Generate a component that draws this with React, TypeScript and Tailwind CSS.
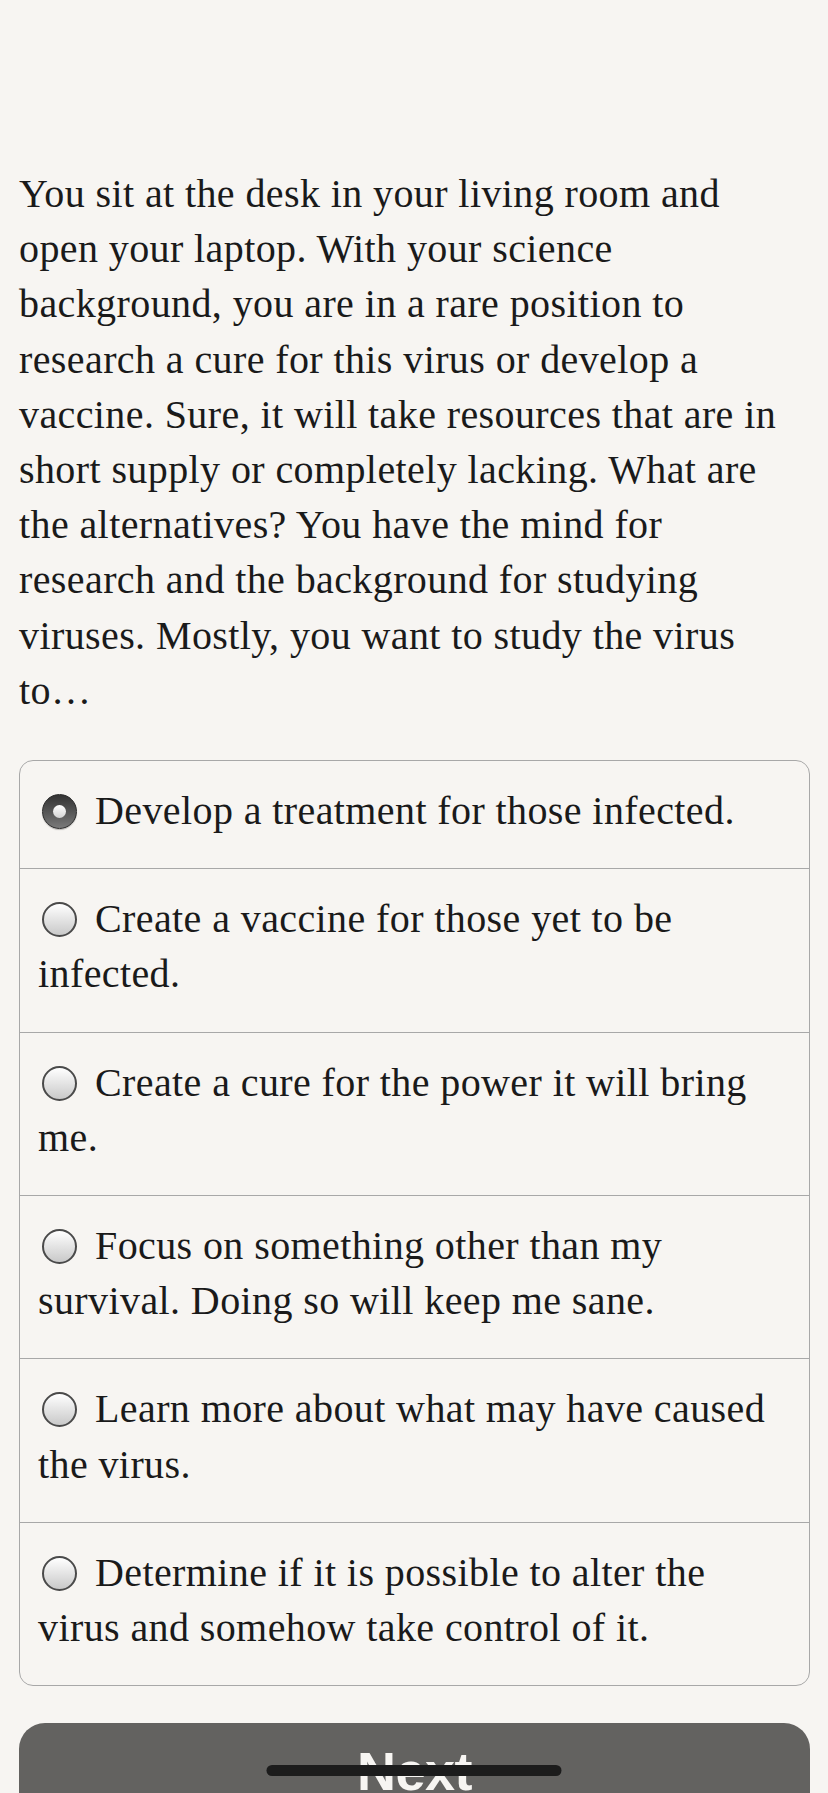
import React from "react";

const options: { lines: string[]; selected?: boolean }[] = [
  { lines: ["Develop a treatment for those infected."], selected: true },
  { lines: ["Create a vaccine for those yet to be", "infected."] },
  { lines: ["Create a cure for the power it will bring", "me."] },
  { lines: ["Focus on something other than my", "survival. Doing so will keep me sane."] },
  { lines: ["Learn more about what may have caused", "the virus."] },
  { lines: ["Determine if it is possible to alter the", "virus and somehow take control of it."] },
];

const paragraph = [
  "You sit at the desk in your living room and",
  "open your laptop. With your science",
  "background, you are in a rare position to",
  "research a cure for this virus or develop a",
  "vaccine. Sure, it will take resources that are in",
  "short supply or completely lacking. What are",
  "the alternatives? You have the mind for",
  "research and the background for studying",
  "viruses. Mostly, you want to study the virus",
  "to\u2026",
];

function Radio({ selected }: { selected?: boolean }) {
  if (selected) {
    return (
      <span className="inline-block w-[35px] h-[35px] rounded-full border border-[#2a2a2a] bg-linear-to-b from-[#333333] to-[#7a7a7a] align-[-5px] ml-[4px] mr-[18px] shadow-[0_1px_1px_rgba(0,0,0,0.25)]">
        <span className="block mx-auto mt-[10px] w-[13px] h-[13px] rounded-full bg-linear-to-b from-[#ffffff] to-[#d4d4d4]" />
      </span>
    );
  }
  return (
    <span className="inline-block w-[35px] h-[35px] rounded-full border-2 border-[#4a4a4a] bg-linear-to-b from-[#ffffff] to-[#c9c9c9] align-[-5px] ml-[4px] mr-[18px]" />
  );
}

export default function App() {
  return (
    <div
      className="relative min-h-[1793px] bg-[#f7f5f2] text-[#1a1a1a] overflow-hidden"
      style={{ fontFamily: '"Liberation Serif", "Times New Roman", serif' }}
    >
      <div className="pl-[19px] pr-[18px] pt-[166px]">
        <p className="text-[40px] leading-[55.2px] tracking-[0.4px]">
          {paragraph.map((l, i) => (
            <React.Fragment key={i}>
              {l}
              {i < paragraph.length - 1 && <br />}
            </React.Fragment>
          ))}
        </p>

        <div className="mt-[42px] border border-[#a8a8a8] rounded-[14px] overflow-hidden">
          {options.map((o, i) => (
            <div
              key={i}
              className={`pl-[18px] pr-[16px] pt-[22px] pb-[30px] text-[40px] leading-[55.2px] tracking-[0.4px] ${
                i > 0 ? "border-t border-[#a8a8a8]" : ""
              }`}
            >
              <Radio selected={o.selected} />
              {o.lines.map((l, j) => (
                <React.Fragment key={j}>
                  {l}
                  {j < o.lines.length - 1 && <br />}
                </React.Fragment>
              ))}
            </div>
          ))}
        </div>

        <div className="mt-[37px] h-[130px] rounded-[26px] bg-[#636260] pt-[21px] text-center">
          <span
            className="text-[54px] leading-[54px] font-bold text-[#f7f5f2] tracking-[-0.5px]"
            style={{ fontFamily: '"Liberation Sans", Arial, sans-serif' }}
          >
            Next
          </span>
        </div>
      </div>

      <div className="absolute top-[1765px] left-1/2 -translate-x-1/2 w-[295px] h-[11px] rounded-full bg-[#1c1c1c]" />
    </div>
  );
}
